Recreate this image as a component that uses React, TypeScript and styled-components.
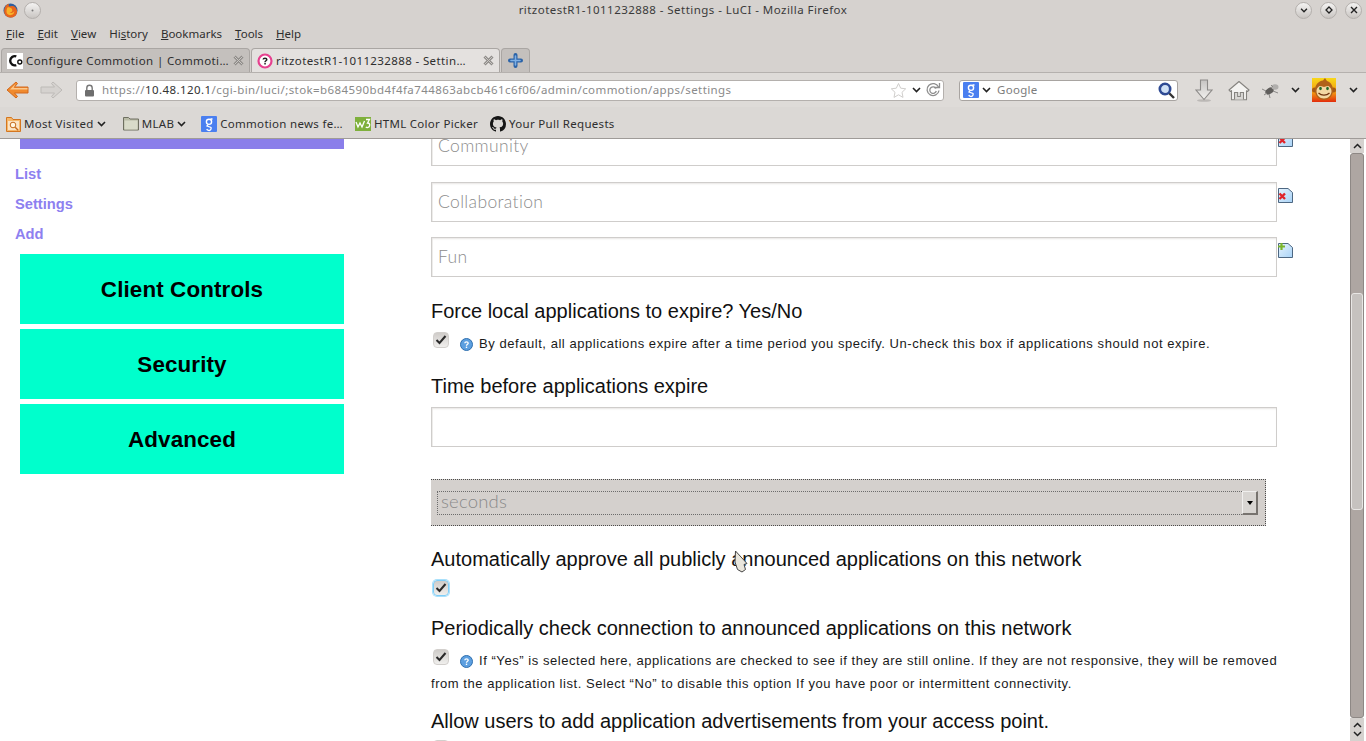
import React from 'react';
import styled, { createGlobalStyle } from 'styled-components';

const GlobalStyle = createGlobalStyle`
  html, body {
    margin: 0;
    padding: 0;
    height: 100%;
    overflow: hidden;
    background: #fff;
  }
`;

const Screen = styled.div`
  position: relative;
  width: 1366px;
  height: 741px;
  overflow: hidden;
  display: flex;
  flex-direction: column;
  font-family: 'Noto Sans', sans-serif;
`;

const Chrome = styled.div`
  background: #d6d2cf;
  color: #2e2e2e;
  height: 138px;
  flex: none;
  border-bottom: 1px solid #9f9b98;
  box-sizing: content-box;
  display: flex;
  flex-direction: column;
`;

const TitleBar = styled.div`
  height: 20px;
  display: grid;
  grid-template-columns: 1fr auto 1fr;
  align-items: center;
  padding: 0 3px;
  font-size: 11.5px;
  letter-spacing: 0.45px;
  color: #3a3a3a;
`;

const TitleLeft = styled.div`
  display: flex;
  align-items: center;
`;

const TitleText = styled.div`
  margin-top: -2px;
`;

const WindowButtons = styled.div`
  display: flex;
  justify-content: flex-end;
  gap: 8px;
  padding-right: 1px;
`;

const RoundButton = styled.div<{ $left?: number }>`
  width: 15px;
  height: 15px;
  margin-left: ${(p) => p.$left ?? 0}px;
  border-radius: 50%;
  background: linear-gradient(#f4f3f2, #c9c5c2);
  border: 1px solid #b3afac;
  display: flex;
  align-items: center;
  justify-content: center;
`;

const MenuBar = styled.div`
  height: 28px;
  box-sizing: border-box;
  display: flex;
  align-items: center;
  padding: 0 6px 2px;
  gap: 13px;
  font-size: 11.5px;
`;

const TabStrip = styled.div`
  height: 24px;
  display: flex;
  align-items: flex-end;
  padding-left: 1px;
  gap: 1px;
  border-bottom: 1px solid #b5b1ae;
`;

const Tab = styled.div<{ $active?: boolean }>`
  width: 249px;
  height: 24px;
  box-sizing: border-box;
  display: flex;
  align-items: center;
  gap: 3px;
  padding: 0 4px 0 5px;
  border: 1px solid #aaa6a3;
  border-bottom: none;
  border-radius: 4px 4px 0 0;
  background: ${(p) => (p.$active ? '#e4e1df' : '#c4c0bd')};
  font-size: 11.5px;
  letter-spacing: 0.38px;
`;

const TabTitle = styled.span`
  flex: 1;
  white-space: nowrap;
  margin-top: -1px;
`;

const NewTab = styled.div`
  width: 29px;
  height: 24px;
  box-sizing: border-box;
  border: 1px solid #aaa6a3;
  border-bottom: none;
  border-radius: 4px 4px 0 0;
  background: #c4c0bd;
  display: flex;
  align-items: center;
  justify-content: center;
`;

const NavBar = styled.div`
  height: 34px;
  display: flex;
  align-items: center;
  padding: 0 0 0 6px;
  background: #dedbd8;
`;

const UrlBar = styled.div`
  width: 868px;
  height: 21px;
  margin-left: 13px;
  box-sizing: border-box;
  background: #fff;
  border: 1px solid #b4b0ad;
  border-radius: 3px;
  display: flex;
  align-items: center;
  padding: 0 2px 0 7px;
  font-size: 11.5px;
  letter-spacing: 0.42px;
  color: #8a8a8a;
`;

const UrlText = styled.span`
  flex: 1;
  margin-left: 7px;
  margin-top: -1px;
  white-space: nowrap;
  b {
    font-weight: 400;
    color: #333;
  }
`;

const SearchBar = styled.div`
  width: 219px;
  height: 21px;
  margin-left: 15px;
  box-sizing: border-box;
  background: #fff;
  border: 1px solid #a8a4a1;
  border-radius: 3px;
  display: flex;
  align-items: center;
  padding: 0 2px 0 3px;
  font-size: 11.5px;
  letter-spacing: 0.3px;
  color: #7c7c7c;
`;

const SearchLabel = styled.span`
  flex: 1;
  margin-left: 6px;
  margin-top: -1px;
`;

const ToolIcon = styled.div<{ $left: number }>`
  margin-left: ${(p) => p.$left}px;
  display: flex;
  align-items: center;
`;

const BookmarkBar = styled.div`
  height: 31px;
  box-sizing: border-box;
  padding: 2px 0 0 6px;
  display: flex;
  align-items: center;
  background: #dbd8d5;
  font-size: 11.5px;
  letter-spacing: 0.3px;
`;

const Bookmark = styled.div<{ $left?: number }>`
  margin-left: ${(p) => p.$left ?? 0}px;
  display: flex;
  align-items: center;
  gap: 3px;
  white-space: nowrap;
`;

const Body = styled.div`
  flex: 1;
  min-height: 0;
  display: flex;
  background: #fff;
  overflow: hidden;
`;

const Sidebar = styled.nav`
  width: 431px;
  flex: none;
  font-family: 'Liberation Sans', sans-serif;
`;

const PurpleBar = styled.div`
  width: 324px;
  height: 10px;
  margin-left: 20px;
  background: #8a7eea;
`;

const SideLinks = styled.div`
  display: flex;
  flex-direction: column;
  gap: 13px;
  padding: 17px 0 11px 15px;
`;

const SideLink = styled.a`
  font-size: 14.7px;
  line-height: 17px;
  font-weight: 700;
  color: #8d80f0;
`;

const SideButtons = styled.div`
  width: 324px;
  margin-left: 20px;
  display: flex;
  flex-direction: column;
  gap: 5px;
`;

const SideButton = styled.div`
  height: 70px;
  box-sizing: border-box;
  padding-top: 2px;
  background: #00ffcc;
  color: #000;
  font-size: 22.4px;
  letter-spacing: 0.12px;
  font-weight: 700;
  display: flex;
  align-items: center;
  justify-content: center;
`;

const Main = styled.main`
  width: 846px;
  flex: none;
  font-family: 'Liberation Sans', sans-serif;
  color: #111;
`;

const FieldRow = styled.div<{ $top: number }>`
  position: relative;
  margin-top: ${(p) => p.$top}px;
  height: 40px;
`;

const TextField = styled.input`
  display: block;
  width: 846px;
  height: 40px;
  box-sizing: border-box;
  border: 1px solid #cfcdcb;
  box-shadow: inset 0 2px 2px -1px #e8e6e4, inset 1px 0 0 #eeecea;
  background: #fff;
  padding: 0 6px 1px;
  outline: none;
  font-family: 'Lato', sans-serif;
  font-weight: 300;
  font-size: 17.5px;
  letter-spacing: 0.35px;
  &::placeholder {
    color: #8c8c8c;
    opacity: 1;
  }
`;

const RowIcon = styled.span`
  position: absolute;
  left: 847px;
  top: 6px;
  line-height: 0;
`;

const Heading = styled.div<{ $top: number }>`
  margin-top: ${(p) => p.$top}px;
  font-size: 20px;
  line-height: 24px;
  white-space: nowrap;
`;

const OptionRow = styled.div<{ $top: number }>`
  margin-top: ${(p) => p.$top}px;
  font-size: 13px;
  line-height: 23px;
  letter-spacing: 0.55px;
  white-space: nowrap;
  color: #1a1a1a;
`;

const Check = styled.span<{ $focus?: boolean }>`
  display: inline-flex;
  align-items: center;
  justify-content: center;
  vertical-align: 3px;
  width: 16px;
  height: 16px;
  margin: -4px 11px 0 2px;
  border-radius: 4px;
  border: 1px solid ${(p) => (p.$focus ? '#7fcdf7' : '#d2cfcc')};
  box-shadow: ${(p) => (p.$focus ? '0 0 0 1px #a9e0fb' : 'none')};
  background: linear-gradient(#cfccc9, #f0efed);
  box-sizing: border-box;
`;

const Help = styled.span`
  display: inline-block;
  line-height: 0;
  vertical-align: -3px;
  margin-right: 6px;
`;

const SelectPanel = styled.div`
  margin-top: 32px;
  width: 835px;
  height: 47px;
  box-sizing: border-box;
  background: #d4d0cd;
  border: 1px dotted #4c4c4c;
  border-left: none;
  padding: 11px 7px 0 6px;
`;

const SelectField = styled.div`
  height: 24px;
  box-sizing: border-box;
  border: 1px dotted #6c6c6c;
  display: flex;
  align-items: center;
  justify-content: space-between;
  padding-left: 3px;
  font-family: 'Lato', sans-serif;
  font-weight: 300;
  font-size: 18.5px;
  letter-spacing: 0.2px;
  color: #8a8a8a;
`;

const SelectLabel = styled.span`
  margin-top: -5px;
`;

const SelectButton = styled.div`
  width: 16px;
  height: 24px;
  margin-right: -1px;
  box-sizing: border-box;
  background: #d8d5d2;
  border-top: 1px solid #f0efee;
  border-left: 1px solid #f0efee;
  border-right: 2px solid #77736f;
  border-bottom: 2px solid #77736f;
  display: flex;
  align-items: center;
  justify-content: center;
`;

const Caret = styled.span`
  width: 0;
  height: 0;
  border-left: 3px solid transparent;
  border-right: 3px solid transparent;
  border-top: 4px solid #000;
`;

const Scrollbar = styled.div`
  width: 16px;
  flex: none;
  margin-left: 73px;
  display: flex;
  flex-direction: column;
  background: #fff;
`;

const ScrollEnd = styled.div<{ $height: number }>`
  height: ${(p) => p.$height}px;
  width: 14px;
  background: #d6d2cf;
  display: flex;
  flex-direction: column;
  align-items: center;
  justify-content: center;
  gap: 3px;
  flex: none;
`;

const ScrollTrack = styled.div`
  flex: 1;
  width: 14px;
  box-sizing: border-box;
  background: #aea6a2;
  border: 1px solid #8e8885;
  border-radius: 3px;
  padding-top: 139px;
`;

const ScrollThumb = styled.div`
  height: 217px;
  background: #c6c2bf;
  border: 1px solid #e8e6e4;
  border-radius: 3px;
  box-sizing: border-box;
`;

const Pointer = styled.svg`
  position: absolute;
  left: 732px;
  top: 550px;
`;

const Chevron = ({ size = 9 }: { size?: number }) => (
  <svg width={size} height={size - 3} viewBox="0 0 9 6">
    <path d="M1 1l3.500 3.500L8 1" fill="none" stroke="#222" strokeWidth="1.600" />
  </svg>
);

const ScrollArrow = ({ up }: { up?: boolean }) => (
  <svg width="9" height="6" viewBox="0 0 9 6">
    <path d={up ? 'M1 5l3.500-3.500L8 5' : 'M1 1l3.500 3.500L8 1'} fill="none" stroke="#222" strokeWidth="1.500" />
  </svg>
);

const CloseX = () => (
  <svg width="13" height="13" viewBox="0 0 13 13">
    <path d="M2.500 2.500l8 8M10.500 2.500l-8 8" stroke="#8f8c89" strokeWidth="3" />
    <path d="M2.500 2.500l8 8M10.500 2.500l-8 8" stroke="#c9c6c3" strokeWidth="1" />
  </svg>
);

const FirefoxLogo = () => (
  <svg width="15" height="15" viewBox="0 0 15 15">
    <circle cx="7.500" cy="7.500" r="7" fill="#2f5f9e" />
    <path d="M1.200 9C1 4.500 3.500 1 6 .8 5.400 2 5.600 3 6.200 3.500 8 2.600 11 2.800 12.500 4.500c1.600 2 2 4.500 1 6.700-1.200 2.500-4 3.500-6.500 3.300C3.500 14.200 1.600 12 1.200 9z" fill="#e8651c" />
    <path d="M4.500 4.500c2-.5 4.500.5 4.800 2.500.2 1.600-1.300 2.600-2.800 2.300 1.300 1.200 4 .6 4.700-1.300.4 2.300-1.600 4.300-4.200 4.200C4.800 12.100 3.500 10.500 3.500 8.500c0-1.500.3-3 1-4z" fill="#f8b32a" />
  </svg>
);

const CommotionFavicon = () => (
  <svg width="16" height="16" viewBox="0 0 16 16">
    <rect width="16" height="16" fill="#fff" />
    <path d="M9.300 3.400A4.600 4.600 0 1 0 9.300 12.100" fill="none" stroke="#111" strokeWidth="2.400" />
    <circle cx="12.800" cy="9" r="2" fill="none" stroke="#111" strokeWidth="1.400" />
  </svg>
);

const UnknownFavicon = () => (
  <svg width="16" height="16" viewBox="0 0 16 16">
    <circle cx="8" cy="8" r="6.500" fill="#fff" stroke="#e6418f" strokeWidth="2.200" />
    <path d="M6.200 6.500C6.200 4.700 9.800 4.700 9.800 6.500 9.800 7.800 8 7.700 8 9.200" fill="none" stroke="#222" strokeWidth="1.500" />
    <rect x="7.300" y="10" width="1.500" height="1.500" fill="#222" />
  </svg>
);

const PlusIcon = () => (
  <svg width="15" height="15" viewBox="0 0 15 15">
    <path d="M7.500 2v11M2 7.500h11" stroke="#2b63a8" strokeWidth="4" strokeLinecap="round" />
    <path d="M7.500 3v9M3 7.500h9" stroke="#7fb0e4" strokeWidth="1.600" strokeLinecap="round" />
  </svg>
);

const BackArrow = () => (
  <svg width="23" height="18" viewBox="0 0 23 18">
    <path d="M10 1L1 9l9 8 1.500-1.500L8.500 12H22V6H8.500l3-3.500z" fill="#f08a2e" stroke="#d2691e" strokeWidth="1" strokeLinejoin="round" />
    <path d="M9.500 3L4 8.500h17.500V7H7.500z" fill="#fbc98e" />
  </svg>
);

const ForwardArrow = () => (
  <svg width="23" height="18" viewBox="0 0 23 18">
    <path d="M13 1l9 8-9 8-1.500-1.500 3-3.500H1V6h13.500l-3-3.500z" fill="#d5d2cf" stroke="#bdbab7" strokeWidth="1" strokeLinejoin="round" />
  </svg>
);

const Lock = () => (
  <svg width="11" height="13" viewBox="0 0 11 13">
    <path d="M2.800 6V4a2.700 2.700 0 0 1 5.400 0v2" fill="none" stroke="#777" strokeWidth="1.400" />
    <rect x="1" y="6" width="9" height="6.500" rx="1" fill="#6e6e6e" />
  </svg>
);

const Star = () => (
  <svg width="17" height="17" viewBox="0 0 17 17">
    <path d="M8.500 1.500l2.200 4.700 5 .6-3.700 3.500 1 5.100-4.500-2.600L4 15.400l1-5.100L1.300 6.800l5-.6z" fill="#fff" stroke="#d0cecc" strokeWidth="1" />
  </svg>
);

const Reload = () => (
  <svg width="16" height="16" viewBox="0 0 16 16">
    <path d="M13.500 5A6 6 0 1 0 14 8.500" fill="none" stroke="#8e8e8e" strokeWidth="1.300" />
    <path d="M11 6.500A3.300 3.300 0 1 0 11.300 9" fill="none" stroke="#8e8e8e" strokeWidth="1.300" />
    <path d="M9 5.500h5.500V1" fill="none" stroke="#8e8e8e" strokeWidth="1.300" />
  </svg>
);

const GoogleBox = ({ size }: { size: number }) => (
  <svg width={size} height={size} viewBox="0 0 16 16">
    <rect width="16" height="16" rx="1" fill="#4a7ff0" />
    <circle cx="8" cy="5.800" r="2.600" fill="none" stroke="#fff" strokeWidth="1.400" />
    <path d="M7 8.600L6 10l4 1.500a2.100 2.100 0 1 1-4.200 1.500M9.500 3h2" fill="none" stroke="#fff" strokeWidth="1.300" />
  </svg>
);

const Magnifier = () => (
  <svg width="17" height="17" viewBox="0 0 17 17">
    <path d="M11 11l5 5" stroke="#333" strokeWidth="2.400" />
    <circle cx="7" cy="7" r="5.200" fill="#cfe0f5" stroke="#2e4a94" strokeWidth="2.600" />
  </svg>
);

const DownloadArrow = () => (
  <svg width="18" height="23" viewBox="0 0 18 23">
    <defs>
      <linearGradient id="dl" x1="0" y1="0" x2="0" y2="1">
        <stop offset="0" stopColor="#c6c4c2" />
        <stop offset="1" stopColor="#f2f1ef" />
      </linearGradient>
    </defs>
    <ellipse cx="9" cy="21.500" rx="7" ry="1.300" fill="#bcb9b6" />
    <path d="M5.500 1h7v10H17l-8 9.500L1 11h4.500z" fill="url(#dl)" stroke="#8c8a88" strokeWidth="1.100" />
  </svg>
);

const HomeIcon = () => (
  <svg width="22" height="21" viewBox="0 0 22 21">
    <path d="M11 1.500L1 10l1.500 1.500 1-.8v9h15v-9l1 .8L21 10z" fill="#f4f3f1" stroke="#85837f" strokeWidth="1.100" strokeLinejoin="round" />
    <path d="M6.500 19.500v-7h3.200v4h2.600v-4h3.200v7" fill="#d9d7d4" stroke="#85837f" strokeWidth="1.100" />
  </svg>
);

const BugIcon = () => (
  <svg width="18" height="17" viewBox="0 0 18 17">
    <ellipse cx="7.500" cy="9" rx="4.500" ry="3" fill="#5f5d5b" transform="rotate(-30 7.500 9)" />
    <ellipse cx="13" cy="5" rx="3.500" ry="2.800" fill="#b0aeac" />
    <path d="M0 7l4 2M2 13l3-2M7 12l1 4M11 9l5 2M9 3l2 2" stroke="#8a8886" strokeWidth="1" />
  </svg>
);

const MonkeyIcon = () => (
  <svg width="24" height="24" viewBox="0 0 24 24">
    <defs>
      <linearGradient id="mbg" x1="0" y1="0" x2="0" y2="1">
        <stop offset="0" stopColor="#f8d81a" />
        <stop offset="0.6" stopColor="#f29a12" />
        <stop offset="1" stopColor="#e22c0c" />
      </linearGradient>
    </defs>
    <rect width="24" height="24" fill="url(#mbg)" />
    <circle cx="2.500" cy="12" r="2.500" fill="#a85a14" />
    <circle cx="21.500" cy="12" r="2.500" fill="#a85a14" />
    <path d="M13 0l2 3c3.500 1 6 4.500 6 9 0 6-4 10-9 10S3 18 3 12c0-5 3.500-9 8-9.500z" fill="#b0621a" />
    <path d="M4.500 13c0-3 2.500-5 4-5 1.200 0 2.500 1 3.500 1s2.300-1 3.500-1c1.500 0 4 2 4 5 0 4-3 7.500-7.500 7.500S4.500 17 4.500 13z" fill="#f3d8a4" />
    <ellipse cx="8.500" cy="10.500" rx="1.300" ry="1.700" fill="#1f6a2a" />
    <ellipse cx="15.500" cy="10.500" rx="1.300" ry="1.700" fill="#1f6a2a" />
    <path d="M6.500 15c3 2.800 8 2.800 11 0" fill="none" stroke="#6e3410" strokeWidth="1.300" />
  </svg>
);

const MostVisitedIcon = () => (
  <svg width="15" height="16" viewBox="0 0 15 16">
    <path d="M.5 1.500h5l1.500 2h7.500v12H.5z" fill="#f6b76a" stroke="#d4761f" />
    <rect x="2" y="5" width="11" height="9" fill="#fbe3c4" />
    <circle cx="7" cy="9" r="2.800" fill="#fff5e2" stroke="#c56a1b" />
    <path d="M9.200 11.200l3 3" stroke="#c56a1b" strokeWidth="1.400" />
  </svg>
);

const FolderIcon = () => (
  <svg width="16" height="15" viewBox="0 0 16 15">
    <path d="M.5 1.500h5l1.500 1.500h8.500v11H.5z" fill="#b9bba6" stroke="#6e6f60" />
    <rect x="1.500" y="4.500" width="13" height="9" fill="#d9dbc9" />
  </svg>
);

const W3Icon = () => (
  <svg width="16" height="14" viewBox="0 0 16 14">
    <rect width="16" height="14" fill="#7fb03c" />
    <path d="M1 5l2 5 2-4 2 4 2.500-6" fill="none" stroke="#fff" strokeWidth="1.300" />
    <path d="M11 2.500h3.500L12.500 6c2 0 2.500 1.500 2 3-.5 1.600-2.500 2-3.700 1" fill="none" stroke="#fff" strokeWidth="1.300" />
  </svg>
);

const GithubIcon = () => (
  <svg width="16" height="16" viewBox="0 0 16 16">
    <path
      fill="#161616"
      d="M8 0C3.580 0 0 3.580 0 8c0 3.540 2.290 6.530 5.470 7.590.4.070.55-.17.55-.38 0-.19-.01-.82-.01-1.490-2.010.37-2.530-.49-2.690-.94-.09-.23-.48-.94-.82-1.130-.28-.15-.68-.52-.01-.53.630-.01 1.080.58 1.230.82.720 1.210 1.870.87 2.330.66.070-.52.280-.87.510-1.070-1.780-.2-3.640-.89-3.640-3.950 0-.87.310-1.590.820-2.150-.08-.2-.36-1.020.08-2.120 0 0 .67-.21 2.200.82.640-.18 1.320-.27 2-.27s1.360.09 2 .27c1.530-1.040 2.200-.82 2.200-.82.440 1.100.16 1.920.08 2.120.51.560.82 1.270.82 2.150 0 3.070-1.870 3.750-3.650 3.950.29.250.54.730.54 1.480 0 1.070-.01 1.930-.01 2.200 0 .21.150.46.550.38A8.010 8.010 0 0 0 16 8c0-4.420-3.580-8-8-8z"
    />
  </svg>
);

const SheetIcon = ({ plus }: { plus?: boolean }) => (
  <svg width="15" height="15" viewBox="0 0 15 15">
    <defs>
      <linearGradient id="sheet" x1="0" y1="0" x2="1" y2="1">
        <stop offset="0" stopColor="#e6f3fd" />
        <stop offset="1" stopColor="#a9d3f7" />
      </linearGradient>
    </defs>
    <path d="M.5.5h9.500l4.500 4v10H.5z" fill="url(#sheet)" stroke="#4d6782" />
    {plus ? (
      <path d="M3.500 0v7M0 3.500h7" stroke="#7ab52c" strokeWidth="2.200" />
    ) : (
      <path d="M1.500 5.500l5.500 5.500M7 5.500l-5.500 5.500" stroke="#e0242a" strokeWidth="2.400" />
    )}
  </svg>
);

const HelpIcon = () => (
  <svg width="13" height="13" viewBox="0 0 13 13">
    <circle cx="6.500" cy="6.500" r="6" fill="#5c9fe0" stroke="#2f6fae" />
    <path d="M4.800 5.200C4.800 3.500 8.200 3.500 8.200 5.200 8.200 6.400 6.500 6.300 6.500 7.800" fill="none" stroke="#fff" strokeWidth="1.300" />
    <rect x="5.800" y="8.600" width="1.400" height="1.400" fill="#fff" />
  </svg>
);

const CheckMark = () => (
  <svg width="12" height="10" viewBox="0 0 12 10">
    <path d="M1.500 5l3 3 6-7" fill="none" stroke="#2a2a2a" strokeWidth="2" />
  </svg>
);

const menus: [string, string, string][] = [
  ['', 'F', 'ile'],
  ['', 'E', 'dit'],
  ['', 'V', 'iew'],
  ['Hi', 's', 'tory'],
  ['', 'B', 'ookmarks'],
  ['', 'T', 'ools'],
  ['', 'H', 'elp'],
];

const App = () => (
  <>
    <GlobalStyle />
    <Screen>
      <Chrome>
        <TitleBar>
          <TitleLeft>
            <FirefoxLogo />
            <RoundButton $left={6}>
              <svg width="3" height="3"><circle cx="1.500" cy="1.500" r="1" fill="#777" /></svg>
            </RoundButton>
          </TitleLeft>
          <TitleText>ritzotestR1-1011232888 - Settings - LuCI - Mozilla Firefox</TitleText>
          <WindowButtons>
            <RoundButton><Chevron size={8} /></RoundButton>
            <RoundButton>
              <svg width="8" height="8" viewBox="0 0 8 8"><path d="M4 1l3 3-3 3-3-3z" fill="none" stroke="#222" strokeWidth="1.300" /></svg>
            </RoundButton>
            <RoundButton>
              <svg width="8" height="8" viewBox="0 0 8 8"><path d="M1 1l6 6M7 1l-6 6" stroke="#222" strokeWidth="1.400" /></svg>
            </RoundButton>
          </WindowButtons>
        </TitleBar>
        <MenuBar>
          {menus.map(([a, u, b]) => (
            <span key={u}>{a}<u>{u}</u>{b}</span>
          ))}
        </MenuBar>
        <TabStrip>
          <Tab>
            <CommotionFavicon />
            <TabTitle>Configure Commotion | Commoti…</TabTitle>
            <CloseX />
          </Tab>
          <Tab $active>
            <UnknownFavicon />
            <TabTitle>ritzotestR1-1011232888 - Settin…</TabTitle>
            <CloseX />
          </Tab>
          <NewTab><PlusIcon /></NewTab>
        </TabStrip>
        <NavBar>
          <BackArrow />
          <ToolIcon $left={11}><ForwardArrow /></ToolIcon>
          <UrlBar>
            <Lock />
            <UrlText>https://<b>10.48.120.1</b>/cgi-bin/luci/;stok=b684590bd4f4fa744863abcb461c6f06/admin/commotion/apps/settings</UrlText>
            <Star />
            <ToolIcon $left={5}><Chevron /></ToolIcon>
            <ToolIcon $left={4}><Reload /></ToolIcon>
          </UrlBar>
          <SearchBar>
            <GoogleBox size={16} />
            <ToolIcon $left={3}><Chevron /></ToolIcon>
            <SearchLabel>Google</SearchLabel>
            <Magnifier />
          </SearchBar>
          <ToolIcon $left={17}><DownloadArrow /></ToolIcon>
          <ToolIcon $left={15}><HomeIcon /></ToolIcon>
          <ToolIcon $left={12}><BugIcon /></ToolIcon>
          <ToolIcon $left={11}><Chevron /></ToolIcon>
          <ToolIcon $left={12}><MonkeyIcon /></ToolIcon>
          <ToolIcon $left={13}><Chevron /></ToolIcon>
        </NavBar>
        <BookmarkBar>
          <Bookmark><MostVisitedIcon />Most Visited<Chevron /></Bookmark>
          <Bookmark $left={17}><FolderIcon />MLAB<Chevron /></Bookmark>
          <Bookmark $left={15}><GoogleBox size={16} />Commotion news fe…</Bookmark>
          <Bookmark $left={12}><W3Icon />HTML Color Picker</Bookmark>
          <Bookmark $left={12}><GithubIcon />Your Pull Requests</Bookmark>
        </BookmarkBar>
      </Chrome>
      <Body>
        <Sidebar>
          <PurpleBar />
          <SideLinks>
            <SideLink>List</SideLink>
            <SideLink>Settings</SideLink>
            <SideLink>Add</SideLink>
          </SideLinks>
          <SideButtons>
            <SideButton>Client Controls</SideButton>
            <SideButton>Security</SideButton>
            <SideButton>Advanced</SideButton>
          </SideButtons>
        </Sidebar>
        <Main>
          <FieldRow $top={-13}>
            <TextField placeholder="Community" readOnly />
            <RowIcon><SheetIcon /></RowIcon>
          </FieldRow>
          <FieldRow $top={16}>
            <TextField placeholder="Collaboration" readOnly />
            <RowIcon><SheetIcon /></RowIcon>
          </FieldRow>
          <FieldRow $top={15}>
            <TextField placeholder="Fun" readOnly />
            <RowIcon><SheetIcon plus /></RowIcon>
          </FieldRow>
          <Heading $top={22}>Force local applications to expire? Yes/No</Heading>
          <OptionRow $top={9}>
            <Check><CheckMark /></Check>
            <Help><HelpIcon /></Help>
            By default, all applications expire after a time period you specify. Un-check this box if applications should not expire.
          </OptionRow>
          <Heading $top={19}>Time before applications expire</Heading>
          <FieldRow $top={9}>
            <TextField readOnly />
          </FieldRow>
          <SelectPanel>
            <SelectField>
              <SelectLabel>seconds</SelectLabel>
              <SelectButton><Caret /></SelectButton>
            </SelectField>
          </SelectPanel>
          <Heading $top={21}>Automatically approve all publicly announced applications on this network</Heading>
          <OptionRow $top={9}>
            <Check $focus><CheckMark /></Check>
          </OptionRow>
          <Heading $top={13}>Periodically check connection to announced applications on this network</Heading>
          <OptionRow $top={9}>
            <Check><CheckMark /></Check>
            <Help><HelpIcon /></Help>
            If “Yes” is selected here, applications are checked to see if they are still online. If they are not responsive, they will be removed
            <br />
            from the application list. Select “No” to disable this option If you have poor or intermittent connectivity.
          </OptionRow>
          <Heading $top={14}>Allow users to add application advertisements from your access point.</Heading>
          <OptionRow $top={10}>
            <Check />
          </OptionRow>
        </Main>
        <Scrollbar>
          <ScrollEnd $height={14}><ScrollArrow up /></ScrollEnd>
          <ScrollTrack><ScrollThumb /></ScrollTrack>
          <ScrollEnd $height={23}><ScrollArrow up /><ScrollArrow /></ScrollEnd>
        </Scrollbar>
      </Body>
      <Pointer width="16" height="24" viewBox="0 0 16 24">
        <path d="M3.500 1L15 13.500l-3 1 1.500 5-3.500 2.500-4.500-2.500L3 12z" fill="#e9e6dc" stroke="#444" strokeWidth="1" />
      </Pointer>
    </Screen>
  </>
);

export default App;
